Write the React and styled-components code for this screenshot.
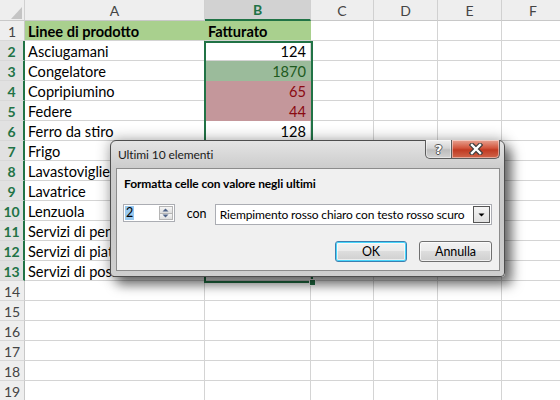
import React from 'react'
import styled, {createGlobalStyle} from 'styled-components'

// excel-ish palette
const GRID = '#d4d4d4'
const XL_GREEN = '#217346'

const GlobalStyle = createGlobalStyle`
  body {
    margin: 0;
    background: #fff;
    overflow: hidden;
  }
`

const Page = styled.div`
  position: relative;
  width: 560px;
  height: 400px;
  overflow: hidden;
  font-family: Lato, 'Liberation Sans', sans-serif;
`

const Grid = styled.div`
  display: grid;
  grid-template-columns: 25px 180px 106px 63px 64px 64px 63px;
  grid-template-rows: 21px repeat(19, 20px);
`

const Corner = styled.div`
  position: relative;
  background: #eeeeee;
  border-right: 1px solid #d0d0d0;
  border-bottom: 1px solid #c8c8c8;
  box-sizing: border-box;

  &::after {
    content: '';
    position: absolute;
    left: 11px;
    top: 7px;
    width: 11px;
    height: 12px;
    background: #c4c4c4;
    clip-path: polygon(100% 0, 100% 100%, 0 100%);
  }
`

const ColHead = styled.div`
  display: flex;
  align-items: center;
  justify-content: center;
  box-sizing: border-box;
  background: ${p => (p.$active ? '#d2d2d2' : '#eeeeee')};
  color: ${p => (p.$active ? XL_GREEN : '#444')};
  font-weight: ${p => (p.$active ? 700 : 400)};
  font-size: 14px;
  border-right: 1px solid #d0d0d0;
  border-bottom: ${p => (p.$active ? `2px solid ${XL_GREEN}` : '1px solid #c8c8c8')};
`

const RowHead = styled.div`
  display: flex;
  align-items: center;
  justify-content: center;
  box-sizing: border-box;
  padding-top: 1px;
  background: ${p => (p.$active ? '#e1e1e1' : '#eeeeee')};
  color: ${p => (p.$active ? XL_GREEN : '#444')};
  font-weight: ${p => (p.$active ? 700 : 400)};
  font-size: 14px;
  border-bottom: 1px solid #d8d8d8;
  border-right: ${p => (p.$active ? `2px solid ${XL_GREEN}` : '1px solid #c8c8c8')};
`

const Cell = styled.div`
  display: flex;
  align-items: center;
  justify-content: ${p => (p.$right ? 'flex-end' : 'flex-start')};
  box-sizing: border-box;
  padding: 2px 4px 0 3px;
  white-space: nowrap;
  overflow: hidden;
  font-size: 14.6px;
  font-weight: ${p => (p.$bold ? 700 : 400)};
  background: ${p => p.$fill || '#fff'};
  color: ${p => p.$color || '#000'};
  border-right: 1px solid ${p => (p.$fill ? p.$fill : GRID)};
  border-bottom: 1px solid ${p => (p.$fill && !p.$keepLine ? p.$fill : GRID)};
`

// selection over B2:B13
const Selection = styled.div`
  position: absolute;
  left: 204px;
  top: 41px;
  width: 109px;
  height: 242px;
  border: 2px solid ${XL_GREEN};
  box-sizing: border-box;
  pointer-events: none;

  &::after {
    content: '';
    position: absolute;
    right: -5px;
    bottom: -5px;
    width: 5px;
    height: 5px;
    background: ${XL_GREEN};
    border: 1px solid #fff;
  }
`

/* ---------- dialog ---------- */

const Dialog = styled.div`
  position: absolute;
  left: 110px;
  top: 140px;
  width: 395px;
  height: 137px;
  box-sizing: border-box;
  display: flex;
  flex-direction: column;
  padding: 0 4px 5px 5px;
  border: 1px solid #4e4e4e;
  border-radius: 6px 6px 4px 4px;
  background: linear-gradient(#e4e4e4, #cdcdcd 26px, #c8c8c8 60%, #cfcfcf);
  box-shadow: 7px 8px 12px rgba(0, 0, 0, 0.5), 0 0 14px 1px rgba(0, 0, 0, 0.3);
  font-family: Lato, 'Open Sans', sans-serif;
  font-size: 12px;
  letter-spacing: -0.1px;
  color: #000;
`

const TitleBar = styled.div`
  display: flex;
  align-items: flex-start;
  height: 27px;
`

const Title = styled.div`
  padding: 6px 0 0 2px;
  font-size: 12px;
  color: #1a1a1a;
`

const TitleButtons = styled.div`
  display: flex;
  margin-left: auto;
  margin-top: -1px;
`

const TitleButton = styled.div`
  display: flex;
  align-items: center;
  justify-content: center;
  width: ${p => p.$w}px;
  height: 19px;
  box-sizing: border-box;
  border: 1px solid #5c5c5c;
  border-top: none;
  background: ${p =>
    p.$close
      ? 'linear-gradient(#e8a493, #d2553c 45%, #c03a22 55%, #d0664b)'
      : 'linear-gradient(#f0f0f0, #d4d4d4 45%, #bdbdbd 55%, #d2d2d2)'};
  border-radius: ${p => (p.$close ? '0 0 5px 0' : '0 0 0 5px')};
  border-left: ${p => (p.$close ? 'none' : '1px solid #5c5c5c')};
  box-shadow: inset 0 0 0 1px rgba(255, 255, 255, 0.45);
`

const HelpGlyph = styled.span`
  font-family: 'DejaVu Sans', sans-serif;
  font-weight: 700;
  font-size: 13px;
  color: #fff;
  text-shadow: 1px 0 #555, -1px 0 #555, 0 1px #555, 0 -1px #555;
  line-height: 1;
`

const Panel = styled.div`
  flex: 1;
  display: flex;
  flex-direction: column;
  padding: 7px 7px 0 6px;
  background: #f0f0f0;
  border: 1px solid #8c8c8c;
`

const Label = styled.div`
  margin-left: 1px;
  font-weight: 700;
  line-height: 16px;
`

const FieldRow = styled.div`
  display: flex;
  align-items: flex-start;
  margin-top: 12px;
`

const Spinner = styled.div`
  display: flex;
  justify-content: space-between;
  width: 52px;
  height: 18px;
  box-sizing: border-box;
  padding: 1px;
  border: 1px solid #abadb3;
  background: #fff;
`

const SpinValue = styled.span`
  align-self: center;
  padding: 0 1px;
  background: #99c9ef;
  line-height: 14px;
  font-size: 12.5px;
`

const SpinButtons = styled.div`
  display: flex;
  flex-direction: column;
  width: 14px;
`

const SpinButton = styled.div`
  flex: 1;
  display: flex;
  align-items: center;
  justify-content: center;
  border: 1px solid #b5b5b5;
  border-top: ${p => (p.$down ? 'none' : '1px solid #b5b5b5')};
  background: linear-gradient(#f6f6f6, #dedede);
`

const Con = styled.span`
  width: 28px;
  margin: 2px 0 0 12px;
  line-height: 16px;
  font-size: 12.5px;
`

const Select = styled.div`
  display: flex;
  align-items: center;
  width: 278px;
  height: 21px;
  box-sizing: border-box;
  padding: 0 1px 0 4px;
  border: 1px solid #abadb3;
  background: #fff;
  white-space: nowrap;
  letter-spacing: -0.15px;
`

const DropButton = styled.div`
  display: flex;
  flex-shrink: 0;
  align-items: center;
  justify-content: center;
  margin-left: auto;
  width: 17px;
  height: 17px;
  box-sizing: border-box;
  border: 1px solid #555;
  background: linear-gradient(#f4f4f4, #e0e0e0);
`

const Buttons = styled.div`
  display: flex;
  justify-content: flex-end;
  gap: 12px;
  margin-top: 16px;
`

const Button = styled.div`
  display: flex;
  align-items: center;
  justify-content: center;
  width: ${p => p.$w}px;
  height: 21px;
  box-sizing: border-box;
  border: 1px solid ${p => (p.$default ? '#3c7fb1' : '#707070')};
  border-radius: 3px;
  background: linear-gradient(#f2f2f2, #ebebeb 45%, #dddddd 50%, #cfcfcf);
  box-shadow: ${p =>
    p.$default
      ? 'inset 0 0 0 1px #48d6fb, inset 0 0 0 2px rgba(255,255,255,.6)'
      : 'inset 0 0 0 1px rgba(255,255,255,.7)'};
  font-size: 12.5px;
`

const Arrow = ({up, color = '#4d6185', w = 5}) => (
  <svg width={w + 2} height={4} viewBox="0 0 7 4">
    <path d={up ? 'M0.5 3.5 L3.5 0.5 L6.5 3.5 Z' : 'M0.5 0.5 L6.5 0.5 L3.5 3.5 Z'} fill={color} />
  </svg>
)

const CloseGlyph = () => (
  <svg width="14" height="12" viewBox="0 0 14 12">
    <path d="M3 2 L11 10 M11 2 L3 10" stroke="#3d3d3d" strokeWidth="4.6" strokeLinecap="square" />
    <path d="M3 2 L11 10 M11 2 L3 10" stroke="#fff" strokeWidth="2.4" strokeLinecap="square" />
  </svg>
)

const LETTERS = ['A', 'B', 'C', 'D', 'E', 'F']

const GREEN_FILL = {$fill: '#9bbb9b', $color: '#1e5a1e'}
const RED_FILL = {$fill: '#c4979b', $color: '#8a0a12'}

// values from row 7 down sit under the dialog, so they are left out
const ROWS = [
  {a: 'Linee di prodotto', b: 'Fatturato', head: true},
  {a: 'Asciugamani', b: 124},
  {a: 'Congelatore', b: 1870, style: GREEN_FILL},
  {a: 'Copripiumino', b: 65, style: RED_FILL},
  {a: 'Federe', b: 44, style: RED_FILL},
  {a: 'Ferro da stiro', b: 128},
  {a: 'Frigo'},
  {a: 'Lavastoviglie'},
  {a: 'Lavatrice'},
  {a: 'Lenzuola'},
  {a: 'Servizi di pentole'},
  {a: 'Servizi di piatti'},
  {a: 'Servizi di posate'},
]

const App = () => {
  const rows = Array.from({length: 19}, (_, i) => ROWS[i] || null)

  return (
    <Page>
      <GlobalStyle />
      <Grid>
        <Corner />
        {LETTERS.map(l => (
          <ColHead key={l} $active={l === 'B'}>
            {l}
          </ColHead>
        ))}

        {rows.map((row, i) => {
          const n = i + 1
          const selected = n >= 2 && n <= 13
          const headFill = row && row.head ? {$fill: '#a9d08e', $bold: true, $keepLine: true} : {}
          return (
            <React.Fragment key={n}>
              <RowHead $active={selected}>{n}</RowHead>
              <Cell {...headFill}>{row ? row.a : ''}</Cell>
              <Cell $right={row && !row.head} {...headFill} {...(row && row.style)}>
                {row && row.b != null ? row.b : ''}
              </Cell>
              {[0, 1, 2, 3].map(c => (
                <Cell key={c} />
              ))}
            </React.Fragment>
          )
        })}
      </Grid>

      <Selection />

      <Dialog>
        <TitleBar>
          <Title>Ultimi 10 elementi</Title>
          <TitleButtons>
            <TitleButton $w={27}>
              <HelpGlyph>?</HelpGlyph>
            </TitleButton>
            <TitleButton $w={48} $close>
              <CloseGlyph />
            </TitleButton>
          </TitleButtons>
        </TitleBar>

        <Panel>
          <Label>Formatta celle con valore negli ultimi</Label>
          <FieldRow>
            <Spinner>
              <SpinValue>2</SpinValue>
              <SpinButtons>
                <SpinButton>
                  <Arrow up />
                </SpinButton>
                <SpinButton $down>
                  <Arrow />
                </SpinButton>
              </SpinButtons>
            </Spinner>
            <Con>con</Con>
            <Select>
              Riempimento rosso chiaro con testo rosso scuro
              <DropButton>
                <Arrow color="#000" />
              </DropButton>
            </Select>
          </FieldRow>
          <Buttons>
            <Button $w={72} $default>
              OK
            </Button>
            <Button $w={73}>Annulla</Button>
          </Buttons>
        </Panel>
      </Dialog>
    </Page>
  )
}

export default App
